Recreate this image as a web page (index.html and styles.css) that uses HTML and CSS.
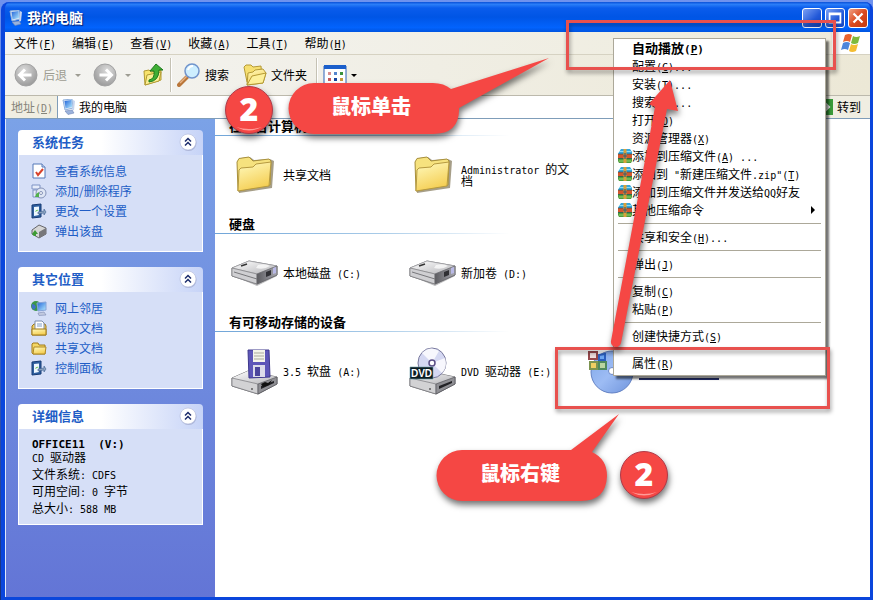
FILE: index.html
```
<!DOCTYPE html>
<html lang="zh-CN">

<head>
  <meta charset="UTF-8">
  <meta name="viewport" content="width=device-width, initial-scale=1.0">
  <title>我的电脑</title>
  <link rel="stylesheet" href="styles.css">
</head>

<body>
  <!-- Shared icons -->
  <svg class="sprite" width="0" height="0" aria-hidden="true">
    <defs>
      <linearGradient id="g-folder" x1="0" y1="0" x2="0.4" y2="1">
        <stop offset="0" stop-color="#fffbc0"/><stop offset="1" stop-color="#f5cf55"/>
      </linearGradient>
      <linearGradient id="g-metal" x1="0" y1="0" x2="1" y2="1">
        <stop offset="0" stop-color="#ffffff"/><stop offset="1" stop-color="#b4b4b8"/>
      </linearGradient>
      <linearGradient id="g-dark" x1="0" y1="0" x2="1" y2="0">
        <stop offset="0" stop-color="#5c5c60"/><stop offset="1" stop-color="#a8a8b0"/>
      </linearGradient>
      <linearGradient id="g-screen" x1="0" y1="0" x2="1" y2="1">
        <stop offset="0" stop-color="#1f62d8"/><stop offset="1" stop-color="#b5ecff"/>
      </linearGradient>
      <radialGradient id="g-nav" cx="0.4" cy="0.3" r="0.7">
        <stop offset="0" stop-color="#dcdcdc"/><stop offset="1" stop-color="#9c9c9c"/>
      </radialGradient>
      <linearGradient id="g-disc" x1="0" y1="0" x2="1" y2="1">
        <stop offset="0" stop-color="#7fa6e8"/><stop offset="0.5" stop-color="#9dbcf4"/><stop offset="1" stop-color="#6f94dc"/>
      </linearGradient>
    </defs>

    <symbol id="i-computer" viewBox="0 0 16 16">
      <path d="M2 1l9-1 1 9-8 2z" fill="#dfe9f8" stroke="#8fb0dc"/>
      <path d="M3.500 2l7-1 .6 7-6.600 1.500z" fill="url(#g-screen)"/>
      <path d="M12 1l2 1-1 9-2 1z" fill="#c7d5ee"/>
      <path d="M4 12l7-1 2 3-6 1.500z" fill="#9ab2dc" stroke="#6e87b8" stroke-width=".6"/>
    </symbol>

    <symbol id="i-folder" viewBox="0 0 38 38">
      <path d="M3 37L36 32 38 5 34 3 18 4 14 1 5 2 1 6z" fill="#6a5d38" opacity=".6"/>
      <path d="M1 6L3 2.500 13 1 17 5 33 3 35 5 34 29 2 35z" fill="#f6e27e" stroke="#a8903c"/>
      <path d="M3 14L5 12 17 11 20 8 35 6 33 30 2 35z" fill="url(#g-folder)" stroke="#b69a40"/>
    </symbol>

    <symbol id="i-drive" viewBox="0 0 48 26">
      <path d="M2 16L26 26 46 16 46 13 26 20z" fill="#77777c" opacity=".5"/>
      <path d="M1 8L18 1 46 6 46 15 26 24 1 16z" fill="#e4e4e6" stroke="#77777b"/>
      <path d="M1 8L18 1 46 6 26 14z" fill="url(#g-metal)" stroke="#a2a2a6" stroke-width=".7"/>
      <path d="M1 8L26 14V24L1 16z" fill="#cfcfd2" stroke="#7c7c80" stroke-width=".7"/>
      <path d="M26 14L46 6V15L26 24z" fill="url(#g-dark)" stroke="#66666a" stroke-width=".7"/>
      <path d="M3 12L26 19" stroke="#77777b"/>
      <path d="M35 12L40 10V15L35 17z" fill="#303034"/>
      <path d="M42 8L45 7V13L42 14z" fill="#b9b9e6"/>
      <path d="M10 6l6-2" stroke="#333" stroke-width="1.500"/>
      <path d="M27 5q8-2 12 1-6 4-14 2z" fill="#fff" opacity=".7"/>
    </symbol>

    <symbol id="i-removable" viewBox="0 0 48 26">
      <path d="M1 9L17 2 46 8V15L27 25 1 17z" fill="#dededf" stroke="#6f6f73"/>
      <path d="M1 9L17 2 46 8 27 15z" fill="url(#g-metal)"/>
      <path d="M1 9L27 15V25L1 17z" fill="#d2d2d4" stroke="#77777b" stroke-width=".7"/>
      <path d="M27 15L46 8V15L27 25z" fill="#8f8f94" stroke="#55555a" stroke-width=".7"/>
      <path d="M30 17L43 12V14L30 20z" fill="#222226"/>
      <path d="M21 19v2" stroke="#222"/>
    </symbol>

    <symbol id="i-settings" viewBox="0 0 16 16">
      <path d="M1 2l9-1v13l-9 1z" fill="#2f5f9e" stroke="#153a74"/>
      <path d="M3 4l5-.5v8.500l-5 1z" fill="#eef8ff"/>
      <path d="M4 9q1-3 4-2z" fill="#6abf5a"/>
      <path d="M7 9l6-1v-2l2 3-2 3V10L7 11z" fill="#8ca2be" stroke="#3a5f90" stroke-width=".6"/>
    </symbol>

    <symbol id="i-small-folder" viewBox="0 0 16 16">
      <path d="M1 13V4l1-1h5l1 2h6v9H2z" fill="#f4d766" stroke="#a07a1a"/>
      <path d="M2 14l1-7h12l-1 7z" fill="url(#g-folder)" stroke="#b08a26"/>
    </symbol>

    <symbol id="i-rar" viewBox="0 0 14 14">
      <path d="M1 3L3 0h9l2 3v2H0z" fill="#35a7dc"/>
      <path d="M0 5h14v4H0z" fill="#d4572c"/>
      <path d="M0 9h14v3l-1 2H1l-1-2z" fill="#4d9c3c"/>
      <path d="M0 5h14M0 9.500h14" stroke="#2a4f56" stroke-width=".7"/>
      <path d="M1 2.500h12" stroke="#8fdcf4"/>
      <path d="M1 12h12" stroke="#9ad46b"/>
      <path d="M5.500 0h3v14h-3z" fill="#d8a13a"/>
      <path d="M7 4v6M5 7h4" stroke="#40566c" stroke-width="1.200"/>
    </symbol>

    <symbol id="i-collapse" viewBox="0 0 18 18">
      <circle cx="9.500" cy="10" r="8" fill="#8790b8" opacity=".5"/>
      <circle cx="9" cy="9" r="8" fill="#fff" stroke="#b6bddd" stroke-width=".7"/>
      <path d="M6 8.500l3-3 3 3M6 12.500l3-3 3 3" fill="none" stroke="#1c2c6c" stroke-width="1.500"/>
    </symbol>

    <symbol id="i-nav" viewBox="0 0 24 24">
      <circle cx="12" cy="12" r="11" fill="url(#g-nav)" stroke="#a2a2a2"/>
      <path d="M5.500 12h12M11 6.500L5.500 12l5.500 5.500" fill="none" stroke="#fff" stroke-width="3"/>
    </symbol>
  </svg>

  <div class="window">
    <header class="titlebar">
      <svg class="icon16"><use href="#i-computer"/></svg>
      <h1>我的电脑</h1>
      <div class="window-buttons">
        <button class="min" aria-label="最小化"><svg viewBox="0 0 20 20"><path d="M4 14h8" stroke="#b9c8f0" stroke-width="3"/></svg></button>
        <button class="max" aria-label="最大化"><svg viewBox="0 0 20 20"><path d="M4 5h12v10H4zM4 6h12" fill="none" stroke="#fff" stroke-width="2"/></svg></button>
        <button class="close" aria-label="关闭"><svg viewBox="0 0 20 20"><path d="M5 5l10 10M15 5L5 15" stroke="#fff" stroke-width="2.500"/></svg></button>
      </div>
    </header>

    <nav class="menubar">
      <button>文件<span class="key">(<u>F</u>)</span></button>
      <button>编辑<span class="key">(<u>E</u>)</span></button>
      <button>查看<span class="key">(<u>V</u>)</span></button>
      <button>收藏<span class="key">(<u>A</u>)</span></button>
      <button>工具<span class="key">(<u>T</u>)</span></button>
      <button>帮助<span class="key">(<u>H</u>)</span></button>
      <div class="brand">
        <svg viewBox="0 0 20 20" width="20" height="20">
          <path d="M4 2q4-2 7 0L9 9Q6 7 2 9z" fill="#e8642e"/>
          <path d="M12 3q3 2 7 0l-2 7q-4 2-7 0z" fill="#7dba3c"/>
          <path d="M2 10q4-2 7 0l-2 7Q4 15 0 17z" fill="#4c86dc"/>
          <path d="M10 11q3 2 7 0l-2 7q-4 2-7 0z" fill="#f4bd32"/>
        </svg>
      </div>
    </nav>

    <div class="toolbar">
      <button disabled class="back">
        <svg width="24" height="24"><use href="#i-nav"/></svg>
        <span>后退</span>
        <i class="caret"></i>
      </button>
      <button disabled class="forward" aria-label="前进">
        <svg width="24" height="24"><use href="#i-nav"/></svg>
        <i class="caret"></i>
      </button>
      <button aria-label="向上">
        <svg viewBox="0 0 24 24" width="24" height="24">
          <path d="M3 8l5-1 2 2 10-2v10L4 22z" fill="#f8e36c" stroke="#b29a32"/>
          <path d="M4 22L6 12l14-3-2 9z" fill="#fbef95" stroke="#b29a32"/>
          <path d="M8 17q6-1 5-9h-4l6-7 7 6h-4q0 11-10 12z" fill="#3fae35" stroke="#1f7a1c"/>
        </svg>
      </button>
      <span class="separator"></span>
      <button class="labelled">
        <svg viewBox="0 0 24 24" width="24" height="24">
          <path d="M10 14L2 22" stroke="#b9763a" stroke-width="4" stroke-linecap="round"/>
          <path d="M10 13L3 20" stroke="#e8b384" stroke-width="1.500"/>
          <circle cx="15" cy="8" r="7" fill="#cdeeff" stroke="#7194cc" stroke-width="1.500"/>
          <path d="M11 7q1-4 5-4" fill="none" stroke="#fff" stroke-width="2"/>
        </svg>
        <span>搜索</span>
      </button>
      <button class="labelled">
        <svg viewBox="0 0 24 24" width="24" height="24">
          <path d="M1 4l2-2 5 0 2 2 8-1 1 13-15 3z" fill="#f6df70" stroke="#b59a35"/>
          <path d="M4 22L5 10l5-1 2-2 8-1 3 4-3 10z" fill="url(#g-folder)" stroke="#b59a35"/>
          <path d="M4 22L9 13l14-3-3 10z" fill="#fdf09a" stroke="#b59a35"/>
        </svg>
        <span>文件夹</span>
      </button>
      <span class="separator"></span>
      <button class="views" aria-label="查看">
        <svg viewBox="0 0 24 24" width="24" height="24">
          <path d="M1 3h22v19H1z" fill="#fff" stroke="#2d62b8"/>
          <path d="M1 2h22v4H1z" fill="#1b5fcb"/>
          <path d="M5 9h3v3H5z" fill="#d98f8f"/><path d="M11 9h3v3h-3z" fill="#5585cc"/><path d="M17 9h3v3h-3z" fill="#3b913b"/>
          <path d="M5 15h3v3H5z" fill="#c95a5a"/><path d="M11 15h3v3h-3z" fill="#16449d"/><path d="M17 15h3v3h-3z" fill="#c79a3d"/>
        </svg>
        <i class="caret"></i>
      </button>
    </div>

    <div class="addressbar">
      <label for="address">地址<span class="key">(<u>D</u>)</span></label>
      <div class="address-field">
        <svg class="icon16"><use href="#i-computer"/></svg>
        <input id="address" type="text" value="我的电脑">
      </div>
      <button class="go">
        <svg viewBox="0 0 16 16" width="16" height="16">
          <path d="M0 0h16v16H0z" fill="#3a9a3a"/>
          <path d="M3 8h9M8 4l4 4-4 4" fill="none" stroke="#fff" stroke-width="2"/>
        </svg>
        转到
      </button>
    </div>

    <div class="body">
      <aside class="sidebar">
        <section class="panel">
          <h2>系统任务 <svg width="18" height="18"><use href="#i-collapse"/></svg></h2>
          <ul>
            <li><a href="#">
              <svg class="icon16" viewBox="0 0 16 16"><path d="M2 1h9l3 3v11H2z" fill="#fff" stroke="#5578b8"/><path d="M11 1v3h3" fill="#cfdcf2" stroke="#5578b8"/><path d="M5 9l2 3 5-6" fill="none" stroke="#d8432c" stroke-width="2"/></svg>
              查看系统信息</a></li>
            <li><a href="#">
              <svg class="icon16" viewBox="0 0 16 16"><path d="M1 2h8v4H1zM2 7h7v7H2z" fill="#e6ecfa" stroke="#7e93c4"/><circle cx="10" cy="10" r="5" fill="#dfe6f4" stroke="#8592b8"/><circle cx="10" cy="10" r="1.500" fill="#fff" stroke="#8592b8"/><path d="M5 11l3-2v5H4z" fill="#52b04e"/></svg>
              添加/删除程序</a></li>
            <li><a href="#"><svg class="icon16"><use href="#i-settings"/></svg> 更改一个设置</a></li>
            <li><a href="#">
              <svg class="icon16" viewBox="0 0 16 16"><path d="M1 7l7-5 7 3v6l-7 4-7-4z" fill="#d5d5d5" stroke="#66666a"/><path d="M8 9l7-4v6l-7 4z" fill="#77777b"/><path d="M1 11l3-4 3 4-2 0v2H3z" fill="#3c9b35"/></svg>
              弹出该盘</a></li>
          </ul>
        </section>

        <section class="panel">
          <h2>其它位置 <svg width="18" height="18"><use href="#i-collapse"/></svg></h2>
          <ul>
            <li><a href="#">
              <svg class="icon16" viewBox="0 0 16 16"><circle cx="5" cy="6" r="5" fill="#3b9648"/><path d="M1 4q3 0 4 3l-2 3Q0 8 1 4z" fill="#3c72c8"/><path d="M6 3l9-1v8l-8 1z" fill="url(#g-screen)" stroke="#86a4d8"/><path d="M7 13l6-1 2 3-7 .5z" fill="#c2cae0" stroke="#7e8ab0" stroke-width=".6"/></svg>
              网上邻居</a></li>
            <li><a href="#">
              <svg class="icon16" viewBox="0 0 16 16"><path d="M1 6l2-2h11l1 2v9H1z" fill="#f1cf62" stroke="#a07a1a"/><path d="M4 1h7l2 2v7H4z" fill="#fff" stroke="#7e8eac"/><path d="M6 4h5M6 6h5" stroke="#7e9cc8"/><path d="M1 9h14v6H1z" fill="url(#g-folder)" stroke="#a07a1a"/></svg>
              我的文档</a></li>
            <li><a href="#"><svg class="icon16"><use href="#i-small-folder"/></svg> 共享文档</a></li>
            <li><a href="#"><svg class="icon16"><use href="#i-settings"/></svg> 控制面板</a></li>
          </ul>
        </section>

        <section class="panel">
          <h2>详细信息 <svg width="18" height="18"><use href="#i-collapse"/></svg></h2>
          <div class="details">
            <strong>OFFICE11&nbsp; (V:)</strong>
            <div class="kind"><span class="key">CD </span>驱动器</div>
            <p>文件系统<span class="key">: CDFS</span></p>
            <p>可用空间<span class="key">: 0 </span>字节</p>
            <p>总大小<span class="key">: 588 MB</span></p>
          </div>
        </section>
      </aside>

      <main class="content">
        <section>
          <h3>在这台计算机上存储的文件</h3>
          <div class="tiles">
            <div class="tile"><svg width="44" height="38"><use href="#i-folder"/></svg><span>共享文档</span></div>
            <div class="tile"><svg width="44" height="38"><use href="#i-folder"/></svg><span><span class="key">Administrator </span>的文档</span></div>
          </div>
        </section>

        <section>
          <h3>硬盘</h3>
          <div class="tiles">
            <div class="tile"><svg width="48" height="26"><use href="#i-drive"/></svg><span>本地磁盘<span class="key"> (C:)</span></span></div>
            <div class="tile"><svg width="48" height="26"><use href="#i-drive"/></svg><span>新加卷<span class="key"> (D:)</span></span></div>
          </div>
        </section>

        <section>
          <h3>有可移动存储的设备</h3>
          <div class="tiles">
            <div class="tile">
              <svg viewBox="0 0 48 48" width="48" height="48">
                <use href="#i-removable" y="22" width="48" height="26"/>
                <path d="M17 3h21l1 27-21 1z" fill="#5d56b8" stroke="#3e388c"/>
                <path d="M22 3h12v12H22z" fill="#f4f4ea"/>
                <path d="M23 6h10M23 9h10M23 12h10" stroke="#a9a99c"/>
                <path d="M22 18h12v12H22z" fill="#dcdcea"/>
                <path d="M24 20h5v9h-5z" fill="#4b459c"/>
                <path d="M30 37l4-2 3 1 4-3-3 5-6 2z" fill="#111"/>
              </svg>
              <span><span class="key">3.5 </span>软盘<span class="key"> (A:)</span></span>
            </div>
            <div class="tile">
              <svg viewBox="0 0 48 48" width="48" height="48">
                <use href="#i-removable" y="22" width="48" height="26"/>
                <ellipse cx="23" cy="16" rx="14" ry="15" fill="#d5d8f2" stroke="#77779c"/>
                <path d="M23 16L13 6q8-8 17-2zM23 16l13-5q3 9-3 15z" fill="#fff" opacity=".8"/>
                <circle cx="23" cy="16" r="3" fill="#fff" stroke="#5b4f86" stroke-width="1.500"/>
                <path d="M1 20h23v12H1z" fill="#0b1c22" stroke="#6fa0a8" stroke-width=".6"/>
                <text x="12.500" y="30" text-anchor="middle" class="dvd">DVD</text>
              </svg>
              <span><span class="key">DVD </span>驱动器<span class="key"> (E:)</span></span>
            </div>
            <div class="tile selected">
              <svg viewBox="0 0 48 48" width="48" height="48">
                <circle cx="25" cy="25" r="21" fill="url(#g-disc)" stroke="#6482c4"/>
                <circle cx="25" cy="24" r="3.500" fill="#fff" stroke="#6b88c8"/>
                <path d="M2 5h8v7H2z" fill="#f0dede" stroke="#96484c" stroke-width="2"/>
                <path d="M12 8l6-1v6h-6z" fill="#6da6f2" stroke="#2c5fc0" stroke-width="2"/>
                <path d="M3 15h7v7H3z" fill="#f0cf62" stroke="#7c9450" stroke-width="2"/>
                <path d="M12 15h7v7h-7z" fill="#b9d5a0" stroke="#4f8a5e" stroke-width="2"/>
              </svg>
              <span class="underline"></span>
            </div>
          </div>
        </section>
      </main>
    </div>
  </div>

  <!-- Right-click menu of the CD drive -->
  <div class="context-menu">
    <button class="default">自动播放<span class="key">(<u>P</u>)</span></button>
    <button>配置<span class="key">(<u>C</u>)...</span></button>
    <button>安装<span class="key">(<u>T</u>)...</span></button>
    <button>搜索<span class="key">(<u>E</u>)...</span></button>
    <button>打开<span class="key">(<u>O</u>)</span></button>
    <button>资源管理器<span class="key">(<u>X</u>)</span></button>
    <button><svg class="rar"><use href="#i-rar"/></svg>添加到压缩文件<span class="key">(<u>A</u>) ...</span></button>
    <button><svg class="rar"><use href="#i-rar"/></svg>添加到<span class="key"> "</span>新建压缩文件<span class="key">.zip"(<u>T</u>)</span></button>
    <button><svg class="rar"><use href="#i-rar"/></svg>添加到压缩文件并发送给<span class="key">QQ</span>好友</button>
    <button class="submenu"><svg class="rar"><use href="#i-rar"/></svg>其他压缩命令</button>
    <hr>
    <button>共享和安全<span class="key">(<u>H</u>)...</span></button>
    <hr>
    <button>弹出<span class="key">(<u>J</u>)</span></button>
    <hr>
    <button>复制<span class="key">(<u>C</u>)</span></button>
    <button>粘贴<span class="key">(<u>P</u>)</span></button>
    <hr>
    <button>创建快捷方式<span class="key">(<u>S</u>)</span></button>
    <hr>
    <button>属性<span class="key">(<u>R</u>)</span></button>
  </div>

  <!-- Tutorial marks -->
  <div class="frame frame-autoplay"></div>
  <div class="frame frame-drive"></div>
  <svg class="marks" viewBox="0 0 873 600" width="873" height="600">
    <g class="mark">
      <path d="M314 83H433Q444 83 451 89L549 58 459 108Q460 134 433 134H314A25.500 25.500 0 0 1 314 83z"/>
      <path d="M462 450H571L619 414 592 452Q607 459 607 476Q606 501 581 501H462A25.500 25.500 0 0 1 462 450z"/>
      <path d="M611 341L655 107 649 104 670 80 678 111 667 109 621 343A5 5 0 0 1 611 341z"/>
    </g>
    <g class="mark badge">
      <circle cx="249" cy="110" r="23.500"/>
      <circle cx="644" cy="475" r="23.500"/>
    </g>
    <path class="shine" d="M236 127q13 7 26 0-13 4-26 0zM631 492q13 7 26 0-13 4-26 0z"/>
    <text class="number" x="249" y="121">2</text>
    <text class="number" x="644" y="486">2</text>
    <text class="callout-text" x="371" y="114">鼠标单击</text>
    <text class="callout-text" x="520" y="481">鼠标右键</text>
  </svg>
</body>

</html>
```
FILE: styles.css
```
* {
  box-sizing: border-box;
}

body {
  position: relative;
  display: flex;
  min-height: 100vh;
  margin: 0;
  padding-top: 2px;
  overflow: hidden;
  background: linear-gradient(#6f92ee, #4a72dc 40%, #16307c);
  font-family: "Noto Sans CJK SC", sans-serif;
  font-size: 12px;
  line-height: 16px;
  color: #000;
}

button {
  margin: 0;
  padding: 0;
  border: 0;
  background: none;
  font: inherit;
  color: inherit;
  white-space: nowrap;
}

svg {
  flex: none;
}

.sprite {
  position: absolute;
}

.icon16 {
  width: 16px;
  height: 16px;
}

/* half-width latin beside the full-width text */
.key {
  font-family: "DejaVu Sans Mono", monospace;
  font-size: 10px;
  line-height: 8px;
  white-space: pre-wrap;
}

.window {
  flex: 1;
  display: flex;
  flex-direction: column;
  margin-left: 1px;
  border: solid #0a46dc;
  border-width: 0 3px 3px 4px;
  border-radius: 8px 8px 0 0;
  background: #0a46dc;
}

/* Title bar */
.titlebar {
  display: flex;
  align-items: center;
  height: 30px;
  padding: 2px 0 0 3px;
  border-radius: 6px 6px 0 0;
  background: linear-gradient(#0a50d8, #2a7df8 8%, #0a5cec 20%, #0055e5 50%, #0263fd 85%, #0054e0);
}

.titlebar h1 {
  flex: 1;
  margin: 0 0 2px 3px;
  font-size: 14px;
  color: #fff;
  text-shadow: 1px 1px 1px #0a1f70;
}

.window-buttons {
  display: flex;
  gap: 3px;
  padding-right: 2px;
}

.window-buttons button {
  width: 20px;
  height: 20px;
  border: 1px solid #fff;
  border-radius: 3px;
  background: linear-gradient(135deg, #7ba0f4, #2158d8 60%, #1646c0);
}

.window-buttons .close {
  background: linear-gradient(135deg, #f0a184, #dc4a20 50%, #c03a10);
}

.window-buttons svg {
  display: block;
  width: 18px;
  height: 18px;
}

/* Menu bar */
.menubar {
  display: flex;
  align-items: center;
  gap: 16px;
  height: 23px;
  padding-left: 9px;
  border-bottom: 1px solid #d6d2c2;
  background: linear-gradient(90deg, #f4f4f2, #eeebdb);
}

.brand {
  display: flex;
  justify-content: center;
  align-items: center;
  align-self: stretch;
  width: 38px;
  margin-left: auto;
  background: #fff;
}

/* Toolbar */
.toolbar {
  display: flex;
  align-items: center;
  gap: 10px;
  height: 41px;
  padding-left: 9px;
  border-bottom: 1px solid #bcb9ac;
  background: linear-gradient(90deg, #f4f4f2, #ece8d6);
}

.toolbar button {
  display: flex;
  align-items: center;
  gap: 4px;
}

.toolbar .back,
.toolbar .forward {
  gap: 8px;
  color: #9d9c92;
}

.toolbar .back {
  margin-right: 2px;
}

.toolbar .back svg {
  margin-right: -3px;
}

.forward svg {
  transform: scaleX(-1);
}

.toolbar .labelled {
  padding-right: 4px;
}

.separator {
  width: 2px;
  height: 34px;
  margin: 0 -5px;
  border-left: 1px solid #c5c2b4;
  border-right: 1px solid #fff;
}

.caret {
  border: 3px solid transparent;
  border-top-color: currentColor;
  border-bottom: 0;
}

/* Address bar */
.addressbar {
  display: flex;
  align-items: center;
  height: 23px;
  padding-left: 6px;
  border-bottom: 1px solid #7f9db9;
  background: #f0eee2;
}

.addressbar label {
  margin-right: 4px;
  color: #85847a;
}

.address-field {
  flex: 1;
  display: flex;
  align-items: center;
  gap: 2px;
  align-self: stretch;
  padding-left: 3px;
  border-left: 1px solid #7f9db9;
  background: #fff;
}

.address-field input {
  flex: 1;
  min-width: 0;
  padding: 0;
  border: 0;
  outline: 0;
  background: none;
  font: inherit;
}

.go {
  display: flex;
  align-items: center;
  gap: 4px;
  padding: 0 9px 0 4px;
}

/* Sidebar */
.body {
  flex: 1;
  display: flex;
  border-left: 1px solid #dfe8fa;
  background: #fff;
}

.sidebar {
  display: flex;
  flex-direction: column;
  gap: 15px;
  width: 209px;
  padding: 11px 12px;
  background: linear-gradient(#7ba2e7, #6375d6);
}

.panel h2 {
  display: flex;
  justify-content: space-between;
  align-items: center;
  height: 25px;
  margin: 0;
  padding: 0 6px 2px 14px;
  border-radius: 4px 4px 0 0;
  background: linear-gradient(90deg, #fff 45%, #c6d3f7);
  font-size: 13px;
  color: #215dc6;
}

.panel ul,
.details {
  margin: 0;
  border: 1px solid #fff;
  border-top: 0;
  background: #d6dff7;
}

.panel ul {
  padding: 6px 12px 10px;
  list-style: none;
}

.panel a {
  display: flex;
  align-items: center;
  gap: 8px;
  height: 20px;
  color: #215dc6;
  text-decoration: none;
}

.details {
  padding: 10px 13px 8px;
}

.details strong,
.details .kind {
  display: block;
  line-height: 12px;
}

.details strong {
  font-family: "DejaVu Sans Mono", monospace;
  font-size: 11px;
}

.details .kind {
  margin-bottom: 2px;
}

.details p {
  margin: 0;
  line-height: 17px;
}

/* Drives and folders */
.content {
  flex: 1;
  min-width: 0;
}

.content h3 {
  height: 17px;
  margin: 0;
  padding-left: 14px;
  background: linear-gradient(90deg, #70a5d8, #a8cbe8 25%, #fff 45%) bottom / 100% 1px no-repeat;
  font-size: 13px;
  line-height: 14px;
}

.tiles {
  display: grid;
  grid-template-columns: repeat(3, 178px);
  height: 81px;
  padding: 0 0 4px 16px;
}

.tile {
  display: flex;
  align-items: center;
  gap: 4px;
  line-height: 12px;
}

.tile > svg {
  width: 48px;
}

.tile > span {
  max-width: 110px;
}

.tile .underline {
  width: 80px;
  height: 18px;
  border-bottom: 2px solid #26306c;
}

.dvd {
  font: bold 10px "Liberation Sans", sans-serif;
  fill: #fff;
}

/* Context menu */
.context-menu {
  position: absolute;
  left: 613px;
  top: 38px;
  width: 213px;
  padding: 0 2px 3px;
  border: 1px solid #aca899;
  background: #fff;
  box-shadow: 3px 3px 2px rgba(0, 0, 0, 0.55);
}

.context-menu button {
  position: relative;
  display: block;
  width: 100%;
  height: 18px;
  padding-left: 16px;
  line-height: 18px;
  text-align: left;
}

.context-menu .default {
  font-size: 13px;
  font-weight: bold;
}

.context-menu .default .key {
  font-size: 11px;
}

.context-menu hr {
  height: 1px;
  margin: 4px 2px;
  border: 0;
  background: #aca899;
}

.rar {
  position: absolute;
  left: 2px;
  top: 2px;
  width: 14px;
  height: 14px;
}

.submenu::after {
  content: "";
  position: absolute;
  right: 8px;
  top: 5px;
  border: 4px solid transparent;
  border-left-color: #000;
  border-right: 0;
}

/* Tutorial marks */
.frame {
  position: absolute;
  border: 3px solid #e8514e;
  filter: drop-shadow(1px 3px 2px rgba(0, 0, 0, 0.4));
}

.frame-autoplay {
  left: 566px;
  top: 20px;
  width: 270px;
  height: 50px;
}

.frame-drive {
  left: 555px;
  top: 347px;
  width: 275px;
  height: 62px;
}

.marks {
  position: absolute;
  left: 0;
  top: 0;
  pointer-events: none;
}

.mark {
  fill: #f54744;
  filter: drop-shadow(1px 4px 3px rgba(0, 0, 0, 0.55));
}

.badge {
  stroke: #b03a48;
}

.shine {
  fill: #ff9c98;
}

.number {
  font: 900 32px "Noto Sans", sans-serif;
  fill: #fff;
  text-anchor: middle;
}

.callout-text {
  font: 900 20px "Noto Sans CJK SC", sans-serif;
  fill: #fff;
  text-anchor: middle;
}
```
